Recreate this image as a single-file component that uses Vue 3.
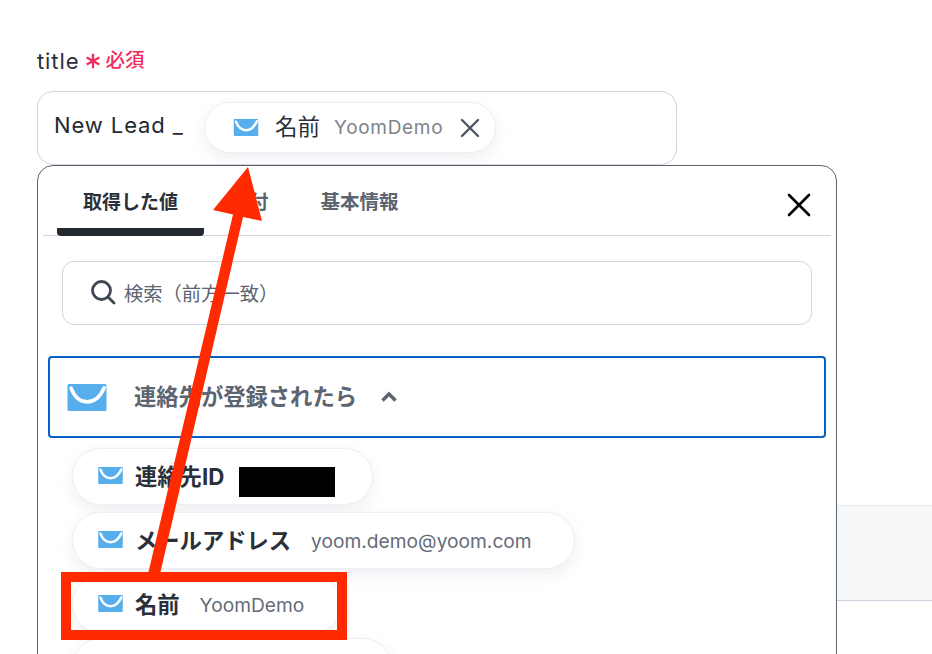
<script setup>
const pills = [
  { name: '連絡先ID', value: '', redacted: true, cls: 'p1' },
  { name: 'メールアドレス', value: 'yoom.demo@yoom.com', cls: 'p2' },
  { name: '名前', value: 'YoomDemo', cls: 'p3' },
  { name: '', value: '', cls: 'p4' },
]
</script>

<template>
  <div class="page">
    <div class="field">
      <div class="label">
        <span class="title">title</span>
        <svg class="star" viewBox="0 0 16 16" width="18" height="18"><path d="M8 1.5v13M2.4 4.8l11.2 6.4M13.6 4.8L2.4 11.2" stroke="#f02d5d" stroke-width="2" fill="none"/></svg>
        <span class="req">必須</span>
      </div>
      <div class="input">
        <span class="input-text">New Lead _</span>
        <div class="chip">
          <svg class="mail m-chip" viewBox="0 0 26 18"><rect width="26" height="18" rx="1" fill="#57aeec"/><path d="M2.4 2.8C7 15 19 15 24.5 2.5" stroke="#fff" stroke-width="2.6" fill="none" stroke-linecap="round"/></svg>
          <span class="chip-name">名前</span>
          <span class="chip-val">YoomDemo</span>
          <svg class="chip-x" viewBox="0 0 20 20" width="20" height="20"><path d="M2 2l16 16M18 2L2 18" stroke="#4b5563" stroke-width="2.4" stroke-linecap="round"/></svg>
        </div>
      </div>
    </div>

    <div class="band"></div>

    <div class="popover">
      <div class="tabs">
        <div class="tab active">取得した値</div>
        <div class="tab t2">日付</div>
        <div class="tab t3">基本情報</div>
        <svg class="close" viewBox="0 0 24 24" width="24" height="24"><path d="M2 2l20 20M22 2L2 22" stroke="#000" stroke-width="2.6" stroke-linecap="round"/></svg>
      </div>
      <div class="body">
        <div class="search">
          <svg class="search-icon" viewBox="0 0 26 26" width="26" height="26"><circle cx="11.5" cy="11.5" r="9" fill="none" stroke="#3f4754" stroke-width="2.8"/><path d="M18 18l6 6" stroke="#3f4754" stroke-width="2.8" stroke-linecap="round"/></svg>
          <span class="search-text">検索（前方一致）</span>
        </div>
        <div class="accordion">
          <svg class="mail m-big" viewBox="0 0 26 18"><rect width="26" height="18" rx="1" fill="#57aeec"/><path d="M2.4 2.8C7 15 19 15 24.5 2.5" stroke="#fff" stroke-width="2.4" fill="none" stroke-linecap="round"/></svg>
          <span class="acc-title">連絡先が登録されたら</span>
          <svg class="chev" viewBox="0 0 18 12" width="18" height="12"><path d="M2.5 9.5L9 3l6.5 6.5" stroke="#5b6470" stroke-width="3.4" fill="none"/></svg>
        </div>
        <div class="pills">
          <div v-for="p in pills" :key="p.cls" class="pill" :class="p.cls">
            <template v-if="p.name">
              <svg class="mail m-pill" viewBox="0 0 26 18"><rect width="26" height="18" rx="1" fill="#57aeec"/><path d="M2.4 2.8C7 15 19 15 24.5 2.5" stroke="#fff" stroke-width="2.6" fill="none" stroke-linecap="round"/></svg>
              <span class="pill-name">{{ p.name }}</span>
              <span v-if="p.redacted" class="redact"></span>
              <span v-else class="pill-val">{{ p.value }}</span>
            </template>
          </div>
        </div>
      </div>
    </div>

    <svg class="annot" viewBox="0 0 932 654" width="932" height="654">
      <rect x="66" y="577" width="276" height="58" fill="none" stroke="#ff2a00" stroke-width="10"/>
      <path d="M248 167L213 210L233 214.5L148 574L160 574L243 217L262 221Z" fill="#ff2a00"/>
    </svg>
  </div>
</template>

<style>
html, body { margin: 0; background: #fff; }
</style>

<style scoped>
.page {
  position: relative;
  width: 932px;
  height: 654px;
  overflow: hidden;
  background: #fff;
  font-family: Inter, "Noto Sans CJK JP", sans-serif;
  color: #1f2630;
  line-height: 1;
}
.field { padding: 47px 0 0 37px; }
.label { display: flex; align-items: center; height: 28px; }
.title { font-size: 22px; letter-spacing: 0.9px; color: #2a303a; }
.star { margin-left: 5px; }
.req { margin-left: 3px; font-size: 19.5px; font-weight: 500; color: #f02d5d; }
.input {
  box-sizing: border-box;
  width: 640px;
  height: 74px;
  margin-top: 16px;
  padding-left: 16px;
  display: flex;
  align-items: center;
  border: 1px solid #d1d5de;
  border-radius: 16px;
}
.input-text { font-size: 22px; letter-spacing: 0.9px; color: #23292f; width: 150px; flex: none; margin-bottom: 6px; }
.chip {
  box-sizing: border-box;
  width: 292px;
  height: 51px;
  margin-bottom: 1px;
  display: flex;
  align-items: center;
  padding-left: 28px;
  background: #fff;
  border: 1px solid #eceef3;
  border-radius: 26px;
  box-shadow: 0 6px 16px rgba(60, 70, 100, 0.08);
}
.mail { flex: none; display: block; }
.m-chip { width: 26px; height: 17px; }
.chip-name { margin-left: 16px; font-size: 22.5px; color: #2a303a; }
.chip-val { margin-left: 14px; font-size: 19px; letter-spacing: 0.7px; color: #80838a; }
.chip-x { margin-left: 17px; }
.band {
  box-sizing: border-box;
  height: 96px;
  margin: 340px 0 0 837px;
  background: #f6f7f9;
  border-top: 1px solid #e5e7eb;
  border-bottom: 1px solid #c9d2dc;
}
.popover {
  position: absolute;
  left: 37px;
  top: 165px;
  box-sizing: border-box;
  width: 800px;
  height: 520px;
  background: #fff;
  border: 1px solid #5b6270;
  border-radius: 16px;
  padding: 0 5px;
}
.tabs {
  position: relative;
  display: flex;
  height: 69px;
  border-bottom: 1px solid #d1d5de;
}
.tab {
  box-sizing: border-box;
  height: 70px;
  padding-top: 27px;
  font-size: 19px;
  font-weight: 700;
  color: #5b6470;
  text-align: center;
}
.tab.active {
  margin-left: 14px;
  width: 147px;
  color: #2a303a;
  border-bottom: 8px solid #23292f;
  border-radius: 0 0 4px 4px;
}
.t2 { margin-left: 13px; width: 65px; }
.t3 { margin-left: 38px; width: 132px; padding-right: 53px; font-size: 19.5px; white-space: nowrap; }
.close { position: absolute; right: 20px; top: 27px; }
.body { padding: 25px 0 0; }
.search {
  box-sizing: border-box;
  width: 750px;
  margin-left: 19px;
  height: 64px;
  display: flex;
  align-items: center;
  gap: 8px;
  padding-left: 27px;
  border: 1px solid #d1d5de;
  border-radius: 12px;
  font-size: 19.3px;
  color: #5b6470;
}
.search-icon { margin-bottom: 2px; }
.search-text { margin-top: 4px; }
.accordion {
  box-sizing: border-box;
  margin: 31px 0 0 5px;
  width: 778px;
  height: 82px;
  display: flex;
  align-items: center;
  padding-left: 17px;
  border: 2px solid #0a5fc9;
  border-radius: 4px;
}
.m-big { width: 40px; height: 27px; }
.acc-title { margin-left: 27px; font-size: 22.3px; font-weight: 700; color: #5b6470; }
.chev { margin-left: 23px; }
.pills {
  display: flex;
  flex-direction: column;
  align-items: flex-start;
  gap: 7px;
  padding: 10px 0 0 29px;
}
.pill {
  box-sizing: border-box;
  height: 57px;
  display: flex;
  align-items: center;
  padding-left: 25px;
  background: #fff;
  border: 1px solid #eceef3;
  border-radius: 29px;
  box-shadow: 0 6px 16px rgba(60, 70, 100, 0.08);
}
.p1 { width: 301px; }
.p2 { width: 503px; }
.p3 { width: 270px; }
.p4 { width: 320px; margin-top: -2px; }
.m-pill { width: 25px; height: 17px; margin-top: -2px; }
.pill-name { margin: 2px 0 0 12px; font-size: 22.3px; font-weight: 700; color: #2a303a; }
.pill-val { margin: 2px 0 0 20px; font-size: 19.2px; color: #656c78; }
.redact { margin: 10px 0 0 15px; width: 96px; height: 30px; background: #000; }
.annot { position: absolute; left: 0; top: 0; pointer-events: none; }
</style>
